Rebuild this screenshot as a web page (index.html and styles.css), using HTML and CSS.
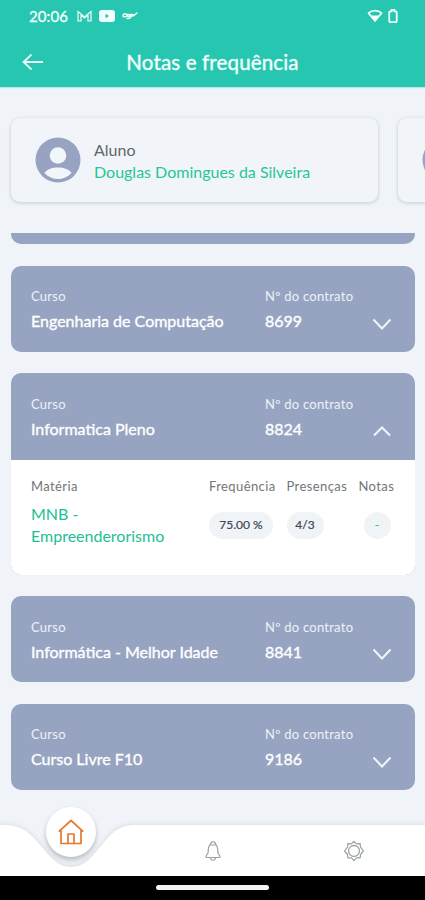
FILE: index.html
```
<!DOCTYPE html>
<html lang="pt-BR">
<head>
<meta charset="utf-8">
<meta name="viewport" content="width=device-width, initial-scale=1">
<title>Notas e frequência</title>
<link rel="stylesheet" href="styles.css">
</head>
<body>
<div class="phone">
  <header class="top">
    <div class="status">
      <span class="clock">20:06</span>
      <svg class="mail" width="15" height="12" viewBox="0 0 15 12"><path d="M1 11V1.500L7.500 7 14 1.500V11H11V5L7.500 8 4 5V11Z" fill="none" stroke="currentColor" stroke-width="1.200"/></svg>
      <svg class="video" width="16" height="12" viewBox="0 0 16 12"><rect width="16" height="12" rx="3" fill="currentColor"/><path d="M6.500 3.800v4.400L10 6z" fill="#26c6b0"/></svg>
      <svg class="brand" width="16" height="10" viewBox="0 0 16 10"><path d="M5 3.500C2.500 2 .8 3.300 1 4.800s3 1.300 4-.3c.4 1.300 2.200 1.500 3 .2.500 1 2 .8 2.600-.3.400.7 2 .3 2.200-.8L15 2M8.800 5C9 7 7 8 5 7.300M5 3.700l6-.2" fill="none" stroke="currentColor" stroke-width="1.400" stroke-linecap="round"/></svg>
      <svg class="wifi" width="16" height="14" viewBox="0 0 16 14"><path d="M1.500 4.200C5 .8 11 .8 14.500 4.200L8 12Z" fill="none" stroke="currentColor" stroke-width="1.700" stroke-linejoin="round"/><path d="M3.500 6.500h9L8 12.500z" fill="currentColor"/></svg>
      <svg class="battery" width="10" height="14" viewBox="0 0 10 15"><path d="M3.500 2.500V1h3v1.500H8a1 1 0 0 1 1 1V13a1 1 0 0 1-1 1H2a1 1 0 0 1-1-1V3.500a1 1 0 0 1 1-1Z" fill="none" stroke="currentColor" stroke-width="1.900"/></svg>
    </div>
    <div class="appbar">
      <svg class="back" width="22" height="18" viewBox="0 0 22 18"><path d="M9.500 1.500 1.500 9l8 7.500M1.500 9H21" fill="none" stroke="currentColor" stroke-width="1.800"/></svg>
      <h1>Notas e frequência</h1>
    </div>
  </header>

  <section class="students">
    <article class="student">
      <svg class="avatar" width="46" height="46" viewBox="0 0 46 46"><circle cx="23" cy="23" r="22.500" fill="#98a2c1"/><circle cx="23" cy="18.500" r="8.300" fill="#f1f6fa"/><path d="M9.500 36C13 28.500 33 28.500 36.500 36 29 44 17 44 9.500 36Z" fill="#f1f6fa"/></svg>
      <div>
        <div class="role">Aluno</div>
        <div class="name">Douglas Domingues da Silveira</div>
      </div>
    </article>
    <article class="student">
      <svg class="avatar" width="46" height="46" viewBox="0 0 46 46"><circle cx="23" cy="23" r="22.500" fill="#98a2c1"/></svg>
    </article>
  </section>

  <main class="courses">
    <article class="course cut"></article>
    <article class="course">
      <div class="head">
        <div class="info"><div class="label">Curso</div><div class="value">Engenharia de Computação</div></div>
        <div class="contract"><div class="label">Nº do contrato</div><div class="value number">8699</div></div>
        <svg class="chevron" width="20" height="13" viewBox="0 0 20 13"><path d="m1.500 1.500 8.500 9 8.500-9" fill="none" stroke="currentColor" stroke-width="2"/></svg>
      </div>
    </article>
    <article class="course">
      <div class="head">
        <div class="info"><div class="label">Curso</div><div class="value">Informatica Pleno</div></div>
        <div class="contract"><div class="label">Nº do contrato</div><div class="value number">8824</div></div>
        <svg class="chevron" width="20" height="13" viewBox="0 0 20 13"><path d="m2 10.500 8-8 8 8" fill="none" stroke="currentColor" stroke-width="2"/></svg>
      </div>
      <div class="grades">
        <div class="subject"><div class="th">Matéria</div><div class="link">MNB -<br>Empreenderorismo</div></div>
        <div class="freq"><div class="th">Frequência</div><span class="pill">75.00 %</span></div>
        <div class="pres"><div class="th">Presenças</div><span class="pill">4/3</span></div>
        <div class="notes"><div class="th">Notas</div><span class="pill">-</span></div>
      </div>
    </article>
    <article class="course">
      <div class="head">
        <div class="info"><div class="label">Curso</div><div class="value">Informática - Melhor Idade</div></div>
        <div class="contract"><div class="label">Nº do contrato</div><div class="value number">8841</div></div>
        <svg class="chevron" width="20" height="13" viewBox="0 0 20 13"><path d="m1.500 1.500 8.500 9 8.500-9" fill="none" stroke="currentColor" stroke-width="2"/></svg>
      </div>
    </article>
    <article class="course">
      <div class="head">
        <div class="info"><div class="label">Curso</div><div class="value">Curso Livre F10</div></div>
        <div class="contract"><div class="label">Nº do contrato</div><div class="value number">9186</div></div>
        <svg class="chevron" width="20" height="13" viewBox="0 0 20 13"><path d="m1.500 1.500 8.500 9 8.500-9" fill="none" stroke="currentColor" stroke-width="2"/></svg>
      </div>
    </article>
  </main>

  <nav class="tabs">
    <svg class="wave" width="425" height="56" viewBox="0 0 425 56"><path d="M0 5H4C23 5 31 14 41 26 51 38 58 47 71 47S91 38 101 26C111 14 117 5 136 5H425V56H0Z" fill="#fff"/></svg>
    <div class="tab"><span class="bubble"><svg width="26" height="26" viewBox="0 0 26 26"><path d="M1.300 12.200 13 1.500l11.700 10.700M3 11v13.500h20V11M10 24.500v-9.500h6v9.500" fill="none" stroke="#e77a2d" stroke-width="1.700" stroke-linejoin="round" stroke-linecap="round"/></svg></span></div>
    <div class="tab"><svg width="16" height="22" viewBox="0 0 16 22"><path d="M5.500 4.300C5.500 1 10.500 1 10.500 4.300 13 6 12.500 9 13 13l2 3.300c.2.900-.4 1.200-1 1.200H2c-.6 0-1.200-.3-1-1.200L3 13c.5-4 0-7 2.500-8.700ZM5.500 5h5M5.500 18c.5 3 4.500 3 5 0" fill="none" stroke="#9aa2a5" stroke-width="1.200"/></svg></div>
    <div class="tab"><svg width="22" height="22" viewBox="0 0 22 22"><path d="m11 1.300 2.600 2.600 3.600-.3.300 3.600L20.500 11l-3 3.500-.3 3.300-3.600.1L11 20.700l-2.600-2.800-3.600-.1-.3-3.300-3-3.500 3-3.800.3-3.600 3.600.3Z" fill="none" stroke="#9aa2a5" stroke-width="1.200" stroke-linejoin="round"/><circle cx="11" cy="11" r="5.500" fill="none" stroke="#9aa2a5" stroke-width="1.300"/></svg></div>
  </nav>
  <footer class="gesture"><span></span></footer>
</div>
</body>
</html>
```
FILE: styles.css
```
* { box-sizing: border-box; }
body { margin: 0; background: #f0f4f9; font-family: Lato, "Open Sans", sans-serif; }
.phone { width: 425px; height: 900px; overflow: hidden; display: flex; flex-direction: column; background: #f0f4f9; }

.top { flex: none; height: 87px; background: #26c6b0; color: #f0fffc; box-shadow: 0 1px 1px #b5ebe4; }
.status { height: 31px; display: flex; align-items: center; padding: 0 27px 0 29px; }
.clock { width: 39px; font-size: 15px; line-height: 18px; letter-spacing: .1px; -webkit-text-stroke: .35px; white-space: nowrap; }
.mail { margin-left: 9px; }
.video { margin-left: 7px; }
.brand { margin-left: 7px; }
.wifi { margin-left: auto; }
.battery { margin-left: 5px; }
.appbar { height: 62px; display: grid; grid-template-columns: 1fr auto 1fr; align-items: center; padding: 0 22px; }
.back { color: #e6fbf8; }
h1 { margin: 0; font-size: 20.500px; font-weight: 400; line-height: 26px; letter-spacing: .15px; -webkit-text-stroke: .4px; }

.students { flex: none; height: 146px; padding: 31px 0 0 11px; display: flex; gap: 20px; overflow: hidden; }
.student { flex: none; width: 367px; height: 84px; padding: 0 24px; display: flex; align-items: center; gap: 13px; border-radius: 9px; background: #f1f5f9; box-shadow: 0 1px 3px 1px #d3d8dc; }
.role { font-size: 16px; line-height: 21px; color: #626669; }
.name { padding-top: 1px; font-size: 16px; line-height: 21px; color: #28c596; white-space: nowrap; }

.courses { flex: 1; min-height: 0; overflow: hidden; padding: 0 10px 0 11px; display: flex; flex-direction: column; gap: 21.500px; }
.course { flex: none; border-radius: 10px; overflow: hidden; background: #97a4c1; color: #fff; }
.cut { height: 11px; border-radius: 0 0 10px 10px; }
.head { height: 86.300px; padding: 20.500px 23px 0 20px; display: flex; }
.info { width: 234px; }
.contract { flex: 1; }
.label { font-size: 13px; line-height: 20px; letter-spacing: .25px; color: #edf1f8; white-space: nowrap; }
.value { margin-top: 4px; font-size: 16px; line-height: 22px; letter-spacing: 0; -webkit-text-stroke: .35px; white-space: nowrap; }
.chevron { margin-top: 31.500px; color: #f0f5fa; }
.grades { height: 115px; padding: 16px 0 0 20px; display: flex; background: #fff; }
.subject { width: 178px; }
.freq { width: 77.500px; }
.pres { width: 72px; }
.th { font-size: 13px; line-height: 21px; letter-spacing: .4px; color: #727679; white-space: nowrap; }
.link { margin-top: 6px; font-size: 16px; line-height: 22px; color: #1dc095; }
.pill { display: flex; align-items: center; justify-content: center; width: 64px; height: 27px; margin-top: 15px; border-radius: 14px; background: #f0f4f7; color: #3f4658; font-size: 12px; line-height: 16px; -webkit-text-stroke: .2px; white-space: nowrap; }
.pres .pill { width: 37px; }
.notes .pill { width: 27px; margin-left: 5px; color: #28c596; }

.tabs { position: relative; flex: none; height: 50px; display: flex; }
.wave { position: absolute; left: 0; bottom: 0; filter: drop-shadow(0 -1px 2px #d9dde1); }
.tab { position: relative; flex: 1; display: flex; align-items: center; justify-content: center; }
.bubble { position: absolute; left: 46px; top: -19px; width: 50px; height: 50px; border-radius: 50%; background: #fff; box-shadow: 0 3px 5px #b7bbc0; display: flex; align-items: center; justify-content: center; }
.gesture { position: relative; flex: none; height: 24px; background: #000; display: flex; align-items: center; justify-content: center; }
.gesture span { width: 113px; height: 5px; margin-bottom: 1px; border-radius: 3px; background: #f4f4f4; }
```
